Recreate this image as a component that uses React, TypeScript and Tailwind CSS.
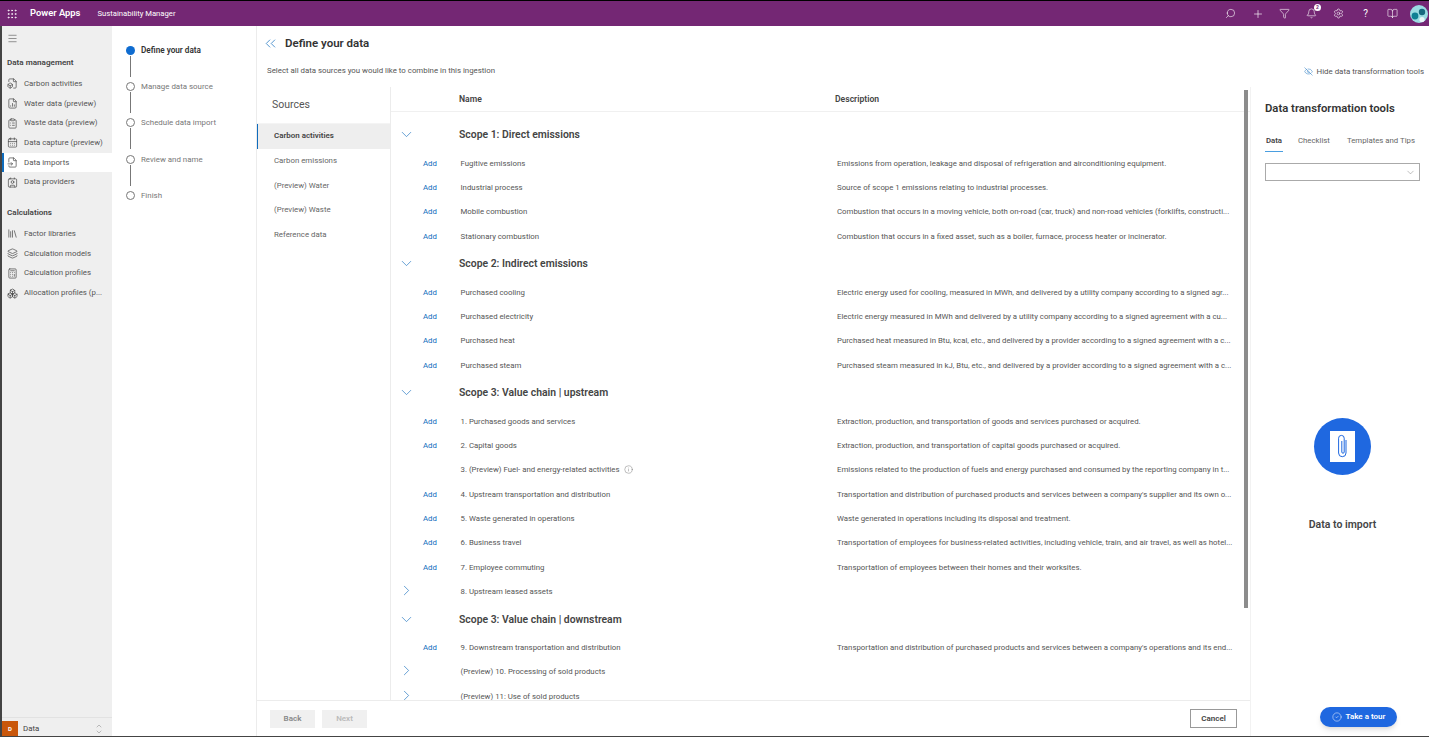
import React from "react";
import { Search, Plus, Filter, Bell, Settings, BookOpen, ChevronDown, ChevronRight, ChevronUp, ChevronsLeft, Menu, Grip, Info, CircleCheck, EyeOff, FileBox, FileChartColumn, ClipboardList, CalendarDays, FileInput, Contact, Library, Layers, Calculator, Boxes } from "lucide-react";

const nav1 = [
  ["Carbon activities", FileBox],
  ["Water data (preview)", FileChartColumn],
  ["Waste data (preview)", ClipboardList],
  ["Data capture (preview)", CalendarDays],
  ["Data imports", FileInput],
  ["Data providers", Contact],
] as const;
const nav2 = [
  ["Factor libraries", Library],
  ["Calculation models", Layers],
  ["Calculation profiles", Calculator],
  ["Allocation profiles (p...", Boxes],
] as const;

type Row = { n: string; d?: string; add?: boolean; exp?: boolean; info?: boolean };
const groups: { t: string; rows: Row[] }[] = [
  { t: "Scope 1: Direct emissions", rows: [
    { n: "Fugitive emissions", add: true, d: "Emissions from operation, leakage and disposal of refrigeration and airconditioning equipment." },
    { n: "Industrial process", add: true, d: "Source of scope 1 emissions relating to industrial processes." },
    { n: "Mobile combustion", add: true, d: "Combustion that occurs in a moving vehicle, both on-road (car, truck) and non-road vehicles (forklifts, constructi..." },
    { n: "Stationary combustion", add: true, d: "Combustion that occurs in a fixed asset, such as a boiler, furnace, process heater or incinerator." },
  ]},
  { t: "Scope 2: Indirect emissions", rows: [
    { n: "Purchased cooling", add: true, d: "Electric energy used for cooling, measured in MWh, and delivered by a utility company according to a signed agr..." },
    { n: "Purchased electricity", add: true, d: "Electric energy measured in MWh and delivered by a utility company according to a signed agreement with a cu..." },
    { n: "Purchased heat", add: true, d: "Purchased heat measured in Btu, kcal, etc., and delivered by a provider according to a signed agreement with a c..." },
    { n: "Purchased steam", add: true, d: "Purchased steam measured in kJ, Btu, etc., and delivered by a provider according to a signed agreement with a c..." },
  ]},
  { t: "Scope 3: Value chain | upstream", rows: [
    { n: "1. Purchased goods and services", add: true, d: "Extraction, production, and transportation of goods and services purchased or acquired." },
    { n: "2. Capital goods", add: true, d: "Extraction, production, and transportation of capital goods purchased or acquired." },
    { n: "3. (Preview) Fuel- and energy-related activities", info: true, d: "Emissions related to the production of fuels and energy purchased and consumed by the reporting company in t..." },
    { n: "4. Upstream transportation and distribution", add: true, d: "Transportation and distribution of purchased products and services between a company's supplier and its own o..." },
    { n: "5. Waste generated in operations", add: true, d: "Waste generated in operations including its disposal and treatment." },
    { n: "6. Business travel", add: true, d: "Transportation of employees for business-related activities, including vehicle, train, and air travel, as well as hotel..." },
    { n: "7. Employee commuting", add: true, d: "Transportation of employees between their homes and their worksites." },
    { n: "8. Upstream leased assets", exp: true },
  ]},
  { t: "Scope 3: Value chain | downstream", rows: [
    { n: "9. Downstream transportation and distribution", add: true, d: "Transportation and distribution of purchased products and services between a company's operations and its end..." },
    { n: "(Preview) 10. Processing of sold products", exp: true },
    { n: "(Preview) 11: Use of sold products", exp: true },
  ]},
];

function NavItem({ label, Icon, active }: { label: string; Icon: React.ComponentType<any>; active?: boolean }) {
  return (
    <div className={`relative flex h-[19.7px] items-center gap-[6px] pl-[5px] ${active ? "bg-white" : ""}`}>
      {active && <div className="absolute left-0 top-0 h-full w-[2px] bg-[#0f6cbd]" />}
      <Icon size={11} strokeWidth={1.5} className="text-[#444]" />
      <span className="whitespace-nowrap text-[7.85px] text-[#555]">{label}</span>
    </div>
  );
}

function Step({ label, active, last }: { label: string; active?: boolean; last?: boolean }) {
  return (
    <div className="flex h-[36.2px] gap-[6px]">
      <div className="flex w-[10px] flex-col items-center">
        <div className={`mt-[-5px] h-[9px] w-[9px] shrink-0 rounded-full ${active ? "bg-[#0f6cd0]" : "border border-[#777] bg-white"}`} />
        {!last && <div className="mt-[1px] h-[21px] w-px bg-[#777]" />}
      </div>
      <span className={`mt-[-6px] whitespace-nowrap leading-[11px] ${active ? "text-[8.2px] font-semibold text-[#333]" : "text-[7.9px] text-[#777]"}`}>{label}</span>
    </div>
  );
}

function TopIcon({ children }: { children: React.ReactNode }) {
  return <div className="flex w-[27px] items-center justify-center">{children}</div>;
}

export default function App() {
  return (
    <div className="relative flex h-[737px] w-[1429px] flex-col overflow-hidden border-b border-[#444] bg-white font-['Roboto',sans-serif]">
      <header className="flex h-[26px] shrink-0 items-center border-t border-black bg-[#742774] text-white">
        <Grip size={12} strokeWidth={1.5} className="ml-[6px]" />
        <span className="ml-[12px] text-[9.4px] font-semibold">Power Apps</span>
        <span className="ml-[17px] text-[7.7px]">Sustainability Manager</span>
        <div className="ml-auto flex items-center">
          <TopIcon><Search size={11} strokeWidth={1.3} className="-scale-x-100" /></TopIcon>
          <TopIcon><Plus size={12} strokeWidth={1.3} /></TopIcon>
          <TopIcon><Filter size={11} strokeWidth={1.3} /></TopIcon>
          <TopIcon>
            <div className="relative">
              <Bell size={11} strokeWidth={1.3} />
              <span className="absolute -right-[4px] -top-[4px] flex h-[7px] w-[7px] items-center justify-center rounded-full bg-white text-[5px] font-bold text-[#742774]">2</span>
            </div>
          </TopIcon>
          <TopIcon><Settings size={11} strokeWidth={1.3} /></TopIcon>
          <TopIcon><span className="text-[10px] leading-none">?</span></TopIcon>
          <TopIcon><BookOpen size={11} strokeWidth={1.3} /></TopIcon>
          <div className="flex w-[23px] items-center justify-center pl-[3px]">
            <svg width="18" height="18" viewBox="0 0 18 18">
              <circle cx="9" cy="9" r="9" fill="#9adbe2" />
              <circle cx="5" cy="11" r="3.4" fill="#0f7f94" />
              <circle cx="12" cy="7" r="3.2" fill="#17697f" />
              <circle cx="12" cy="14.5" r="2.6" fill="#e9f7f8" />
            </svg>
          </div>
        </div>
      </header>

      <div className="flex min-h-0 flex-1">
        <aside className="flex w-[112px] shrink-0 flex-col border-l-2 border-[#444] bg-[#efefef]">
          <div className="flex h-[24px] items-center pl-[5px]"><Menu size={11} strokeWidth={1.2} className="text-[#444]" /></div>
          <div className="mt-[6px] pl-[5px] text-[8.1px] font-semibold leading-[12px] text-[#444]">Data management</div>
          <div className="mt-[6px]">
            {nav1.map(([l, I]) => <NavItem key={l} label={l} Icon={I} active={l === "Data imports"} />)}
          </div>
          <div className="mt-[14px] pl-[5px] text-[8.1px] font-semibold leading-[12px] text-[#444]">Calculations</div>
          <div className="mt-[6px]">
            {nav2.map(([l, I]) => <NavItem key={l} label={l} Icon={I} />)}
          </div>
          <div className="mt-auto flex h-[19px] items-center border-t border-[#e2e2e2]">
            <div className="mt-[3px] flex h-[16px] w-[16px] items-center justify-center bg-[#c9570b] text-[6px] font-bold text-white">D</div>
            <span className="ml-[5px] mt-[3px] text-[7.85px] text-[#444]">Data</span>
            <div className="ml-auto mr-[9px] mt-[3px] flex flex-col text-[#666]">
              <ChevronUp size={8} strokeWidth={1.2} className="-mb-[2px]" />
              <ChevronDown size={8} strokeWidth={1.2} />
            </div>
          </div>
        </aside>

        <nav className="w-[144px] shrink-0 pl-[13px] pt-[25px]">
          <Step label="Define your data" active />
          <Step label="Manage data source" />
          <Step label="Schedule data import" />
          <Step label="Review and name" />
          <Step label="Finish" last />
        </nav>

        <main className="flex min-w-0 flex-1 flex-col border-l border-[#ececec]">
          <div className="flex h-[61px] shrink-0 flex-col">
            <div className="flex h-[35px] items-center pl-[5px]">
              <ChevronsLeft size={17} strokeWidth={1} className="text-[#0f6cbd]" />
              <h1 className="ml-[6px] text-[11.5px] font-semibold text-[#333]">Define your data</h1>
            </div>
            <div className="mt-[3px] flex items-center pl-[10px] pr-[5px]">
              <span className="text-[7.85px] text-[#555]">Select all data sources you would like to combine in this ingestion</span>
              <span className="ml-auto mt-[2px] flex items-center gap-[4px] text-[7.9px] text-[#555]"><EyeOff size={9} strokeWidth={1.2} className="text-[#0f6cbd]" />Hide data transformation tools</span>
            </div>
          </div>

          <div className="flex min-h-0 flex-1">
            <div className="flex min-w-0 flex-1 flex-col">
              <div className="flex min-h-0 flex-1">
                <div className="w-[134px] shrink-0 border-r border-[#ececec]">
                  <div className="flex h-[36.5px] items-center border-b border-[#f4f4f4] pl-[15px] text-[10.5px] text-[#555]">Sources</div>
                  <div className="relative flex h-[25px] items-center bg-[#eeeeee] pl-[17px] text-[7.95px] font-semibold text-[#444]">
                    <div className="absolute left-0 top-0 h-full w-[1px] bg-[#0f6cbd]" />Carbon activities
                  </div>
                  {["Carbon emissions", "(Preview) Water", "(Preview) Waste", "Reference data"].map((s) => (
                    <div key={s} className="flex h-[24.6px] items-center pl-[17px] text-[7.85px] text-[#666]">{s}</div>
                  ))}
                </div>

                <div className="relative min-w-0 flex-1 overflow-hidden">
                  <div className="flex h-[25px] items-center border-b border-[#f0f0f0] text-[8.6px] font-semibold text-[#444]">
                    <span className="ml-[68px] w-[376px]">Name</span>
                    <span>Description</span>
                  </div>
                  <div className="pt-[7.5px]">
                    {groups.map((g) => (
                      <section key={g.t}>
                        <div className="flex h-[31.7px] items-center pb-[1px]">
                          <ChevronDown size={17} strokeWidth={1} className="ml-[7px] text-[#2b7bc4]" />
                          <span className="ml-[44px] text-[10.4px] font-semibold text-[#444]">{g.t}</span>
                        </div>
                        {g.rows.map((r) => (
                          <div key={r.n} className="flex h-[24.35px] items-center text-[7.82px] text-[#555]">
                            <span className="flex w-[69.5px] shrink-0 items-center">
                              {r.exp && <ChevronRight size={17} strokeWidth={1} className="ml-[7px] -mt-[3px] text-[#2b7bc4]" />}
                              {r.add && <span className="ml-[32px] text-[#0f6cbd]">Add</span>}
                            </span>
                            <span className="flex w-[376.5px] shrink-0 items-center gap-[4px] whitespace-nowrap">
                              {r.n}
                              {r.info && <Info size={9} strokeWidth={1} className="-mt-[2px] text-[#555]" />}
                            </span>
                            <span className="whitespace-nowrap">{r.d}</span>
                          </div>
                        ))}
                      </section>
                    ))}
                  </div>
                  <div className="absolute right-[2px] top-[3px] h-[518px] w-[4px] bg-[#8c8c8c]" />
                </div>
              </div>
              <footer className="flex h-[36px] shrink-0 items-center border-t border-[#ececec] pl-[13px] pr-[13px]">
                <span className="flex h-[18px] w-[45px] items-center justify-center bg-[#f0f0f0] text-[8px] font-semibold text-[#888]">Back</span>
                <span className="ml-[7px] flex h-[18px] w-[45px] items-center justify-center bg-[#f0f0f0] text-[8px] font-semibold text-[#bbb]">Next</span>
                <span className="ml-auto flex h-[19px] w-[47px] items-center justify-center border border-[#999] text-[8px] font-semibold text-[#444]">Cancel</span>
              </footer>
            </div>

            <aside className="flex w-[179px] shrink-0 flex-col items-stretch border-l border-[#f2f2f2] pl-[14px] pr-[9px]">
              <h2 className="mt-[14px] text-[11.3px] font-semibold leading-[16px] text-[#333]">Data transformation tools</h2>
              <div className="mt-[18px] flex h-[17px] text-[7.8px] text-[#666]">
                <span className="flex h-full w-[18px] justify-center border-b border-[#4a9ee0] font-semibold text-[#444]">Data</span>
                <span className="ml-[15px]">Checklist</span>
                <span className="ml-[17px]">Templates and Tips</span>
              </div>
              <div className="mt-[11px] flex h-[18px] items-center justify-end border border-[#aaa] pr-[3px]">
                <ChevronDown size={11} strokeWidth={1} className="text-[#777]" />
              </div>
              <div className="mt-[237px] flex flex-col items-center">
                <div className="flex h-[57px] w-[57px] items-center justify-center rounded-full bg-[#1f68e0]">
                  <div className="flex h-[31px] w-[25px] items-center justify-center bg-white">
                    <svg width="11" height="25" viewBox="0 0 11 25" fill="none" stroke="#1f68e0" strokeWidth="1">
                      <path d="M9 6v13a3.7 3.7 0 0 1-7.4 0V4.2a2.8 2.8 0 0 1 5.6 0V18a1.2 1.2 0 0 1-2.4 0V7" />
                    </svg>
                  </div>
                </div>
                <div className="mt-[42px] text-[10.5px] font-semibold text-[#444]">Data to import</div>
              </div>
            </aside>
          </div>
        </main>
      </div>

      <div className="absolute bottom-[9px] right-[32px] flex h-[20px] w-[77px] items-center justify-center gap-[4px] rounded-full bg-[#1f68e0] text-[8px] font-semibold text-white shadow-md">
        <CircleCheck size={10} strokeWidth={1.2} />Take a tour
      </div>
    </div>
  );
}
